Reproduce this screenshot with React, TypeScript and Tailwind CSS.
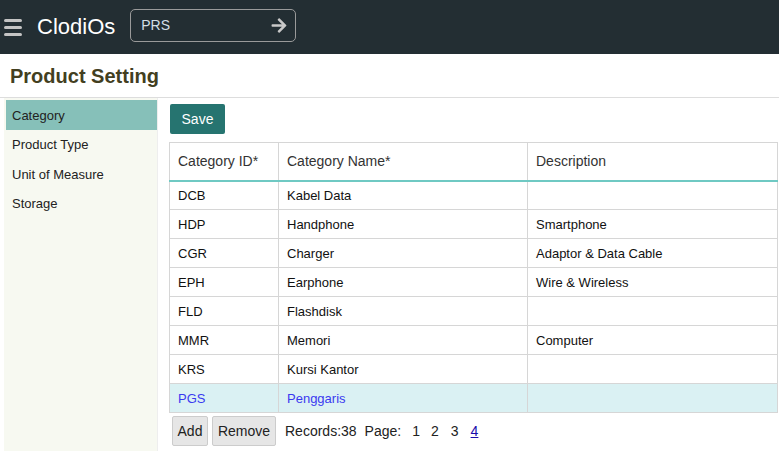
const rows = [
    { id: "DCB", name: "Kabel Data", desc: "" },
    { id: "HDP", name: "Handphone", desc: "Smartphone" },
    { id: "CGR", name: "Charger", desc: "Adaptor & Data Cable" },
    { id: "EPH", name: "Earphone", desc: "Wire & Wireless" },
    { id: "FLD", name: "Flashdisk", desc: "" },
    { id: "MMR", name: "Memori", desc: "Computer" },
    { id: "KRS", name: "Kursi Kantor", desc: "" },
    { id: "PGS", name: "Penggaris", desc: "" },
];

const menu = ["Category", "Product Type", "Unit of Measure", "Storage"];

function ArrowRight() {
    return (
        <svg viewBox="0 0 448 512" className="h-[17px] w-[16px]" fill="#c9c9c9">
            <path d="M190.5 66.9l22.2-22.2c9.4-9.4 24.6-9.4 33.9 0L441 239c9.4 9.4 9.4 24.6 0 33.9L246.6 467.3c-9.4 9.4-24.6 9.4-33.9 0l-22.2-22.2c-9.5-9.5-9.3-25 .4-34.3L311.4 296H24c-13.3 0-24-10.7-24-24v-32c0-13.3 10.7-24 24-24h287.4L190.9 101.2c-9.8-9.3-10-24.8-.4-34.3z" />
        </svg>
    );
}

export default function App() {
    const selected = "PGS";
    return (
        <div className="w-[779px] h-[451px] overflow-hidden bg-white font-['Liberation_Sans',Arial,sans-serif] text-[#222]">
            <header className="h-[54px] bg-[#232e33] flex items-center">
                <div className="w-[22px] ml-[4px] flex flex-col gap-[4px]">
                    <span className="block h-[3px] w-[18px] rounded-sm bg-[#c4c4c4]" />
                    <span className="block h-[3px] w-[18px] rounded-sm bg-[#c4c4c4]" />
                    <span className="block h-[3px] w-[18px] rounded-sm bg-[#c4c4c4]" />
                </div>
                <span className="ml-[11px] text-[22px] text-white leading-none">ClodiOs</span>
                <div className="ml-[15px] mb-[4px] w-[166px] h-[33px] rounded-[5px] border border-[#9a9a9a] flex items-center justify-between pl-[10px] pr-[8px]">
                    <span className="text-[14px] text-[#d3dfe6]">PRS</span>
                    <ArrowRight />
                </div>
            </header>
            <div className="h-[44px] flex items-center px-[10px] border-b border-[#dddddd]">
                <h1 className="text-[20px] font-bold text-[#433f1f] mt-[1px]">Product Setting</h1>
            </div>
            <div className="flex">
                <aside className="w-[154px] ml-[4px] h-[353px] bg-[#f7f9f1] border-r border-[#eeeeee] pt-[2px] pl-[2px]">
                    {menu.map((m, i) => (
                        <div
                            key={m}
                            className={
                                "h-[29.5px] flex items-center pl-[6px] pt-[1px] text-[13px] text-[#222] " +
                                (i === 0 ? "bg-[#86c0b9]" : "")
                            }
                        >
                            {m}
                        </div>
                    ))}
                </aside>
                <main className="ml-[11px] pt-[6px]">
                    <button className="h-[30px] w-[55px] bg-[#267470] text-white text-[14px] rounded-[2px] ml-[1px]">
                        Save
                    </button>
                    <table className="mt-[8px] border-collapse table-fixed w-[608px]">
                        <colgroup>
                            <col className="w-[109px]" />
                            <col className="w-[249px]" />
                            <col className="w-[250px]" />
                        </colgroup>
                        <thead>
                            <tr className="h-[38px]">
                                <th className="border border-[#d6d6d6] border-b-[#6fc9c3] border-b-2 text-left font-normal text-[14px] pl-[8px] text-[#333]">Category ID*</th>
                                <th className="border border-[#d6d6d6] border-b-[#6fc9c3] border-b-2 text-left font-normal text-[14px] pl-[8px] text-[#333]">Category Name*</th>
                                <th className="border border-[#d6d6d6] border-b-[#6fc9c3] border-b-2 text-left font-normal text-[14px] pl-[8px] text-[#333]">Description</th>
                            </tr>
                        </thead>
                        <tbody>
                            {rows.map((r) => {
                                const sel = r.id === selected;
                                const cls =
                                    "border border-[#d6d6d6] pl-[8px] pt-[1px] text-[13px] " +
                                    (sel ? "text-[#3a3af0]" : "text-[#111]");
                                return (
                                    <tr key={r.id} className={"h-[29px] " + (sel ? "bg-[#daf1f3]" : "")}>
                                        <td className={cls}>{r.id}</td>
                                        <td className={cls}>{r.name}</td>
                                        <td className={cls}>{r.desc}</td>
                                    </tr>
                                );
                            })}
                        </tbody>
                    </table>
                    <div className="flex items-center mt-[3px] ml-[3px] text-[14px]">
                        <button className="h-[30px] w-[36px] bg-[#e6e6e6] border border-[#cccccc] rounded-[2px] text-[#222]">Add</button>
                        <button className="h-[30px] w-[64px] ml-[4px] bg-[#e6e6e6] border border-[#cccccc] rounded-[2px] text-[#222]">Remove</button>
                        <span className="ml-[9px] text-[#222]">Records:38</span>
                        <span className="ml-[8px] text-[#222]">Page:</span>
                        <span className="ml-[11px]">1</span>
                        <span className="ml-[11px]">2</span>
                        <span className="ml-[12px]">3</span>
                        <a className="ml-[12px] text-[#1a0dab] underline">4</a>
                    </div>
                </main>
            </div>
        </div>
    );
}
